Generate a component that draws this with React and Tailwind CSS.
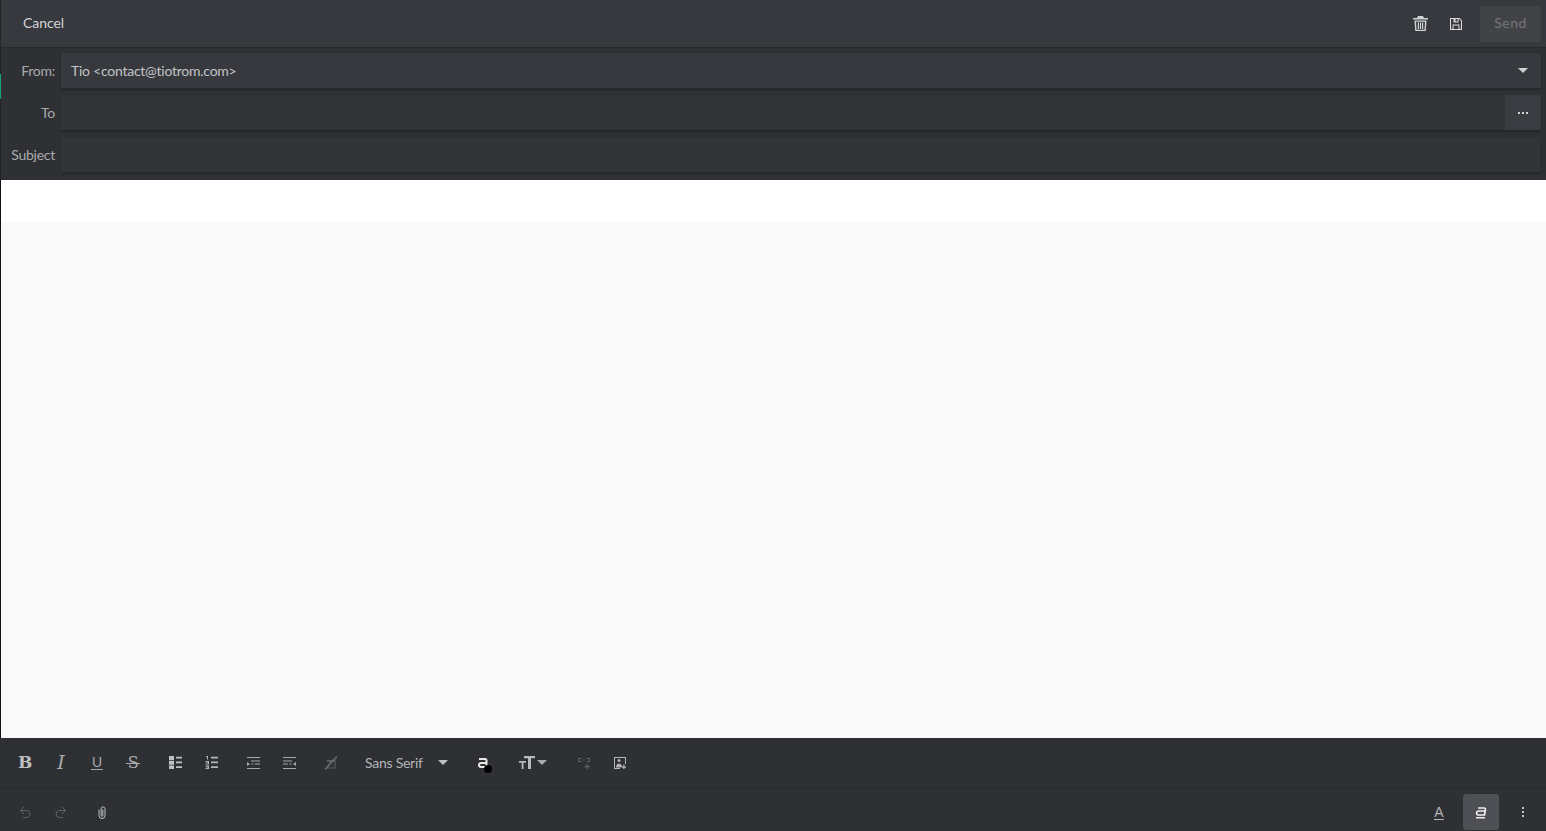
const Ic = ({ className = '', children, w = 14, h = 14 }) => (
   <svg width={w} height={h} viewBox={`0 0 ${w} ${h}`} className={`block shrink-0 ${className}`} fill="currentColor">
      {children}
   </svg>
);

// Caret used by the select-like controls
const Caret = ({ className = '' }) => <span className={`block w-0 h-0 border-x-[5px] border-x-transparent border-t-[5px] border-t-current ${className}`} />;

function FieldRow({ label, children }) {
   return (
      <div className="flex items-center h-[36px]">
         <span className="w-[54px] text-right text-[#a9abad] shrink-0 -mt-[2px]">{label}</span>
         <div className="ml-[6px] mr-[5px] flex-1 flex h-full rounded-[3px] overflow-hidden shadow-[0_1px_2px_rgba(0,0,0,0.25)]">{children}</div>
      </div>
   );
}

function ToolBtn({ className = '', children }) {
   return <span className={`flex items-center justify-center w-[36px] h-[36px] shrink-0 ${className}`}>{children}</span>;
}

export default function App() {
   return (
      <div className="w-[1546px] h-[831px] overflow-hidden flex flex-col bg-[#2e3034] text-[14px] font-['Lato',sans-serif] tracking-[-0.25px]">
         {/* Top bar */}
         <div className="h-[48px] shrink-0 flex items-center bg-[#37393e] border-b border-[#28292d] border-l border-l-[#232427] text-[#d3d4d5]">
            <span className="ml-[22px] -mt-[3px] tracking-[-0.05px]">Cancel</span>
            <div className="ml-auto flex items-center text-[#d0d1d3]">
               <ToolBtn>
                  <Ic w={15} h={15}>
                     <path fillRule="evenodd" d="M5 0h5l1 2h4v1.500H0V2h4zM1.500 4.500h12L12.800 15H2.200zM3 5.800L3.500 13.800h8L12 5.800zM4.800 6.500h1.200v6.500H4.800zM6.900 6.500h1.200v6.500H6.900zM9 6.500h1.200v6.500H9z" />
                  </Ic>
               </ToolBtn>
               <ToolBtn>
                  <Ic w={12} h={12} className="text-[#dcdcdc]">
                     <path fillRule="evenodd" d="M0 0h9.500L12 2.500V12H0zM1 1v10h1.500V6.500h7V11H11V3L9 1H8.500v3.500h-5V1zM5.500 1v2.500h2V1zM3.500 7.500V11h5V7.500z" />
                  </Ic>
               </ToolBtn>
               <span className="ml-[6px] mr-[5px] w-[61px] h-[36px] pb-[2px] flex items-center justify-center rounded-[3px] bg-[#414347] text-[#75777b] tracking-[0.5px]">Send</span>
            </div>
         </div>

         {/* Fields */}
         <div className="relative h-[132px] shrink-0 pt-[5px] flex flex-col gap-[6px] bg-[#2e3034] border-l border-[#232427]">
            <span className="absolute left-[-1px] top-[26px] w-[1px] h-[25px] bg-[#1aa37a]" />
            <FieldRow label="From:">
               <div className="flex-1 flex items-center justify-between bg-[#37393e] border-b border-[#26282b] pl-[10px] pr-[13px] text-[#c2c4c6]">
                  <span className="-mt-[1px]">Tio &lt;contact@tiotrom.com&gt;</span>
                  <Caret className="text-[#d0d1d3]" />
               </div>
            </FieldRow>
            <FieldRow label="To">
               <div className="flex-1 bg-[#323438] border-b border-[#232528]" />
               <div className="w-[36px] flex items-center justify-center bg-[#3a3c41] border-b border-[#26282b] text-[#d0d1d3]">
                  <span className="flex gap-[2px]">
                     <span className="w-[2px] h-[2px] bg-current" />
                     <span className="w-[2px] h-[2px] bg-current" />
                     <span className="w-[2px] h-[2px] bg-current" />
                  </span>
               </div>
            </FieldRow>
            <FieldRow label="Subject">
               <div className="flex-1 bg-[#323438] border-b border-[#282a2d]" />
            </FieldRow>
         </div>

         {/* Body */}
         <div className="flex-1 flex flex-col border-l border-[#111111] bg-white">
            <div className="h-[42px] bg-white" />
            <div className="flex-1 bg-[#f9f9f9]" />
         </div>

         {/* Format toolbar */}
         <div className="h-[50px] shrink-0 flex items-center pl-[7px] bg-[#2e3034] border-b border-[#27292c] text-[#b4b5b7]">
            <ToolBtn>
               <span className="font-['DejaVu_Serif',serif] font-bold text-[17px] text-[#bdbec0]">B</span>
            </ToolBtn>
            <ToolBtn>
               <span className="font-['DejaVu_Serif',serif] italic text-[19px] text-[#a9aaac]">I</span>
            </ToolBtn>
            <ToolBtn>
               <span className="font-['Liberation_Sans',sans-serif] text-[14px] leading-[14px] border-b border-current px-[1px] text-[#a9aaac]">U</span>
            </ToolBtn>
            <ToolBtn>
               <span className="relative font-['DejaVu_Serif',serif] text-[16px] leading-[16px] text-[#a9aaac]">
                  S
                  <span className="absolute left-[-2px] right-[-2px] top-[8px] h-[1px] bg-current" />
               </span>
            </ToolBtn>
            <ToolBtn className="ml-[6px]">
               <Ic w={13} h={13} className="text-[#c0c1c3]">
                  <path d="M0 0h5v4H0zM0 4.700h5v4H0zM0 9.400h5v3.600H0zM7 .800h6v1.700H7zM7 5.500h6v1.700H7zM7 10.200h6v1.700H7z" />
               </Ic>
            </ToolBtn>
            <ToolBtn>
               <Ic w={13} h={13} className="text-[#b4b5b7]">
                  <path d="M1 0h2v3.600H2V1H1zM.500 5h3.500v3.600H.500v-1h2.500v-.5H.800v-.7H3V6H.500zM.500 9.400h3.500v3.600H.500v-1h2.500v-.4H1.200v-.8H3v-.4H.500zM6 .800h7v1.700H6zM6 5.500h7v1.700H6zM6 10.200h7v1.700H6z" />
               </Ic>
            </ToolBtn>
            <ToolBtn className="ml-[6px]">
               <Ic w={13} h={12} className="text-[#a9aaac]">
                  <path d="M0 0h13v1H0zM4 3.500h9v1H4zM0 5l3 2-3 2zM4.500 6.500h2v1h-2zM8 6.500h5v1H8zM0 11h13v1H0z" />
               </Ic>
            </ToolBtn>
            <ToolBtn>
               <Ic w={13} h={12} className="text-[#a9aaac]">
                  <path d="M0 0h13v1H0zM0 3.500h9v1H0zM13 5l-3 2 3 2zM6.500 6.500h2v1h-2zM0 6.500h5v1H0zM0 11h13v1H0z" />
               </Ic>
            </ToolBtn>
            <ToolBtn className="ml-[6px]">
               <Ic w={14} h={14} className="text-[#6a6c70]">
                  <path fillRule="evenodd" d="M3 4h8.500v8.500H2l4-6.500H3zM7 6L4 11.500h6.500V6z" fillOpacity="0.8" />
                  <path d="M.800 13.500L13 .500" stroke="currentColor" strokeWidth="1.500" />
               </Ic>
            </ToolBtn>
            <span className="ml-[16px] flex items-center text-[#b4b5b7]">
               <span className="-mt-[1px]">Sans Serif</span>
               <Caret className="ml-[15px] text-[#c0c1c3]" />
            </span>
            <ToolBtn className="ml-[18px] relative">
               <Ic w={10} h={10} className="text-[#e8e8e8] -ml-[2px]">
                  <path d="M1 1h6a1.500 1.500 0 0 1 1.500 1.500V9H3a2 2 0 0 1 0-4h5.500" fill="none" stroke="currentColor" strokeWidth="2" />
               </Ic>
               <span className="absolute left-[18px] top-[20px] w-[8px] h-[8px] rounded-full bg-black" />
            </ToolBtn>
            <span className="ml-[17px] flex items-center">
               <Ic w={16} h={13} className="text-[#b9babc]">
                  <path d="M0 5h7v1.800H4.500V13H2.700V6.800H0zM5 0h11v2.300h-4V13H9V2.300H5z" />
               </Ic>
               <Caret className="ml-[2px] text-[#a9aaac]" />
            </span>
            <ToolBtn className="ml-[19px]">
               <Ic w={12} h={12} className="text-[#5f6165]">
                  <path d="M0 1h3v1H1v2h2v1H0zM12 1H9v1h2v2H9v1h3zM4.500 2.500h1.200v1H4.500zM6.500 2.500h1.200v1H6.500zM8.500 7h1.300v2H12v1.300H9.800V12.500H8.500v-2.200H6.500V9h2z" />
               </Ic>
            </ToolBtn>
            <ToolBtn>
               <Ic w={12} h={12} className="text-[#b4b5b7]">
                  <path fillRule="evenodd" d="M0 0h12v7h-1V1H1v10h5v1H0zM3.500 3.500a1.500 1.500 0 1 1 3 0 1.500 1.500 0 0 1-3 0zM2 10.500c0-2.500 1.500-4 3-4s3 1.500 3 2.500v1.500zM9.200 7.500h1.300v2h1.500v1.200h-1.500V12.500H9.200v-1.800H7.500V9.500h1.700z" />
               </Ic>
            </ToolBtn>
         </div>

         {/* Bottom bar */}
         <div className="h-[43px] shrink-0 flex items-center pt-[6px] pb-[1px] pl-[7px] pr-[5px] bg-[#2e3034]">
            <ToolBtn>
               <Ic w={12} h={13} className="text-[#5f6165]">
                  <path d="M5 1L1.500 4.500 5 8M1.500 4.500h6a3.500 3.500 0 0 1 0 7H4" fill="none" stroke="currentColor" strokeWidth="1" />
               </Ic>
            </ToolBtn>
            <ToolBtn>
               <Ic w={12} h={13} className="text-[#5f6165]">
                  <path d="M7 1l3.500 3.500L7 8M10.500 4.500h-6a3.500 3.500 0 0 0 0 7H8" fill="none" stroke="currentColor" strokeWidth="1" />
               </Ic>
            </ToolBtn>
            <ToolBtn className="ml-[5px]">
               <Ic w={8} h={13} className="text-[#c0c1c3]">
                  <path d="M1 3.500v6a3 3 0 0 0 6 0V2.800a1.900 1.900 0 0 0-3.800 0V9.500a.8.800 0 0 0 1.600 0V3.500" fill="none" stroke="currentColor" strokeWidth="1" />
               </Ic>
            </ToolBtn>
            <div className="ml-auto flex items-center gap-[6px]">
               <ToolBtn>
                  <span className="font-['Liberation_Sans',sans-serif] text-[14px] leading-[14px] border-b border-current text-[#b4b5b7] tracking-normal">A</span>
               </ToolBtn>
               <ToolBtn className="bg-[#4e5055] rounded-[3px]">
                  <Ic w={12} h={13} className="text-[#f0f0f0]">
                     <path d="M3 2h6a1.500 1.500 0 0 1 1.400 1.700L9.500 9H3.500a2 2 0 0 1 .3-4H10" fill="none" stroke="currentColor" strokeWidth="1.700" />
                     <path d="M1 11h9v1.500H1z" />
                  </Ic>
               </ToolBtn>
               <ToolBtn>
                  <span className="flex flex-col gap-[2px] text-[#c0c1c3]">
                     <span className="w-[2px] h-[2px] bg-current" />
                     <span className="w-[2px] h-[2px] bg-current" />
                     <span className="w-[2px] h-[2px] bg-current" />
                  </span>
               </ToolBtn>
            </div>
         </div>
      </div>
   );
}
